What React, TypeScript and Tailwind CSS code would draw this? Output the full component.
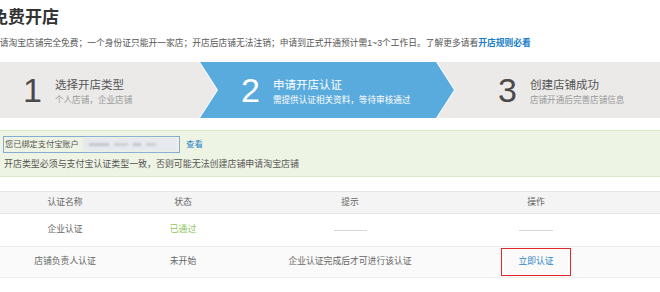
import React from 'react'

const font = { fontFamily: '"Liberation Sans", "Noto Sans CJK SC", sans-serif' }

function Step({ n, title, sub, active }: { n: string; title: string; sub: string; active?: boolean }) {
  return (
    <div className="flex items-center">
      <span className={`text-[34px] leading-none font-light ${active ? 'text-white' : 'text-[#4a4a4a]'}`}>{n}</span>
      <div className="ml-[13px] flex flex-col pt-[4px]">
        <span className={`text-[11.5px] leading-[14px] ${active ? 'text-white' : 'text-[#555]'}`}>{title}</span>
        <span className={`mt-[2px] text-[8.6px] leading-[12px] ${active ? 'text-white' : 'text-[#999]'}`}>{sub}</span>
      </div>
    </div>
  )
}

export default function App() {
  return (
    <div className="w-[660px] h-[292px] overflow-hidden bg-white" style={font}>
      {/* header */}
      <div className="ml-[-9px] pt-[6px]">
        <h1 className="text-[17px] leading-[24px] font-bold text-[#333]">免费开店</h1>
        <p className="mt-[7px] text-[8.75px] leading-[12px] text-[#555] whitespace-nowrap">
          申请淘宝店铺完全免费；一个身份证只能开一家店；开店后店铺无法注销；申请到正式开通预计需1~3个工作日。了解更多请看
          <span className="text-[#1a7ec8] font-bold">开店规则必看</span>
        </p>
      </div>

      {/* steps */}
      <div className="mt-[13px] flex h-[56px] bg-[#ebeae9]">
        <div className="w-[200px] flex items-center pl-[23px]">
          <Step n="1" title="选择开店类型" sub="个人店铺，企业店铺" />
        </div>
        <div className="relative w-[256px] -ml-[1px] bg-white [clip-path:polygon(0_0,238px_0,256px_50%,238px_100%,0_100%,18px_50%)]">
          <div className="absolute inset-0 bg-[#5aabdd] [clip-path:polygon(1px_0,237px_0,255px_50%,237px_100%,1px_100%,19px_50%)]" />
          <div className="relative h-full flex items-center pl-[42px]">
            <Step n="2" title="申请开店认证" sub="需提供认证相关资料，等待审核通过" active />
          </div>
        </div>
        <div className="flex-1 flex items-center pl-[43px]">
          <Step n="3" title="创建店铺成功" sub="店铺开通后完善店铺信息" />
        </div>
      </div>

      {/* alipay notice */}
      <div className="mt-[12px] h-[47px] border-y border-[#dbe7c9] bg-[#eef4e3] pl-[3px] pt-[5px]">
        <div className="flex items-center">
          <div className="flex h-[17px] w-[177px] items-center border border-[#86a9d6] pl-[1px]">
            <span className="text-[8.2px] leading-[12px] text-[#555]">您已绑定支付宝账户</span>
            <div className="ml-[4px] flex h-[13px] w-[94px] items-center gap-[5px] bg-[#e6eaee] px-[6px] blur-[0.8px]">
              <span className="h-[3px] w-[20px] bg-[#c2c6ca]" />
              <span className="h-[3px] w-[14px] bg-[#cbcfd2]" />
              <span className="h-[3px] w-[8px] bg-[#c2c6ca]" />
              <span className="h-[3px] w-[10px] bg-[#cbcfd2]" />
            </div>
          </div>
          <span className="ml-[6px] text-[8.5px] text-[#2a86c6]">查看</span>
        </div>
        <p className="mt-[5px] pl-[1px] text-[8.95px] leading-[12px] text-[#555]">
          开店类型必须与支付宝认证类型一致，否则可能无法创建店铺申请淘宝店铺
        </p>
      </div>

      {/* table */}
      <div className="mt-[14px] text-[8.8px] text-[#666]">
        <div className="grid h-[23px] grid-cols-[130px_106px_228px_144px_1fr] items-center border-y border-[#e6e6e6] bg-[#f4f4f4] text-center">
          <span>认证名称</span>
          <span>状态</span>
          <span>提示</span>
          <span>操作</span>
          <span />
        </div>
        <div className="grid h-[33px] grid-cols-[130px_106px_228px_144px_1fr] items-center border-b border-[#ececec] bg-white text-center">
          <span>企业认证</span>
          <span className="text-[#8dc65a]">已通过</span>
          <span className="flex justify-center"><span className="h-px w-[33px] bg-[#d6d6d6]" /></span>
          <span className="flex justify-center"><span className="h-px w-[34px] bg-[#d6d6d6]" /></span>
          <span />
        </div>
        <div className="grid h-[31px] grid-cols-[130px_106px_228px_144px_1fr] items-center border-b border-[#ececec] bg-[#fafafa] text-center">
          <span>店铺负责人认证</span>
          <span>未开始</span>
          <span>企业认证完成后才可进行该认证</span>
          <span className="flex justify-center">
            <span className="flex h-[28px] w-[70px] items-center justify-center border-[1.5px] border-[#e0282a] text-[#2a86c6]">立即认证</span>
          </span>
          <span />
        </div>
      </div>
    </div>
  )
}
